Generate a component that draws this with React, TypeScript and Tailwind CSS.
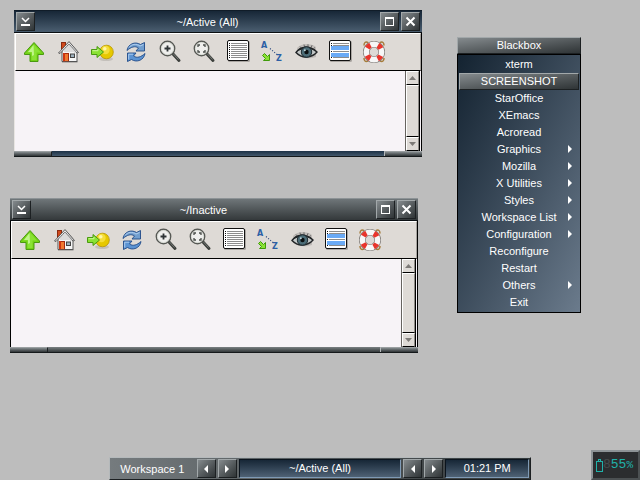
import React from "react";

const metal = "bg-linear-to-br from-[#858b8e] to-[#2f3436]";
const bevel =
  "border border-t-[#a2a8aa] border-l-[#a2a8aa] border-b-[#1c2022] border-r-[#1c2022]";

function TitleButton({ label, children }: { label: string; children: React.ReactNode }) {
  return (
    <button
      aria-label={label}
      className={`flex size-[19px] shrink-0 items-center justify-center ${metal} ${bevel}`}
    >
      <svg width="11" height="11" viewBox="0 0 11 11" fill="none" stroke="#fff" shapeRendering="crispEdges">
        {children}
      </svg>
    </button>
  );
}

function UpIcon() {
  return (
    <>
      <path d="M12 2.5 L21.5 13 V14.5 H16 V21.5 H8 V14.5 H2.5 V13 Z" fill="#73d216" stroke="#4a9a10" />
      <path d="M12 4.5 L19 12.6 H14.6 V20 H9.5 V12.6 H5 Z" fill="#8ae234" />
      <path d="M11.5 5 L6 12 H10 V16 L12 15 Z" fill="#c0f58a" />
    </>
  );
}

function HomeIcon() {
  return (
    <>
      <rect x="5.5" y="2.5" width="4" height="7" fill="#d04a1c" stroke="#8a2a10" />
      <path d="M6 10 L13 2 L21 11 V21.5 H6 Z" fill="#f6f6f6" stroke="#555" />
      <path d="M13 1.5 L2.5 13 L4 13.5 L13 4 L21 13 L22.5 12.5 Z" fill="#e8e8e8" stroke="#444" strokeWidth=".8" />
      <path d="M9 8v4M11 6v6M13 4v8M15 6v6M17 8v4M19 10v3" stroke="#b5b5b5" strokeWidth=".8" />
      <rect x="7.5" y="13.5" width="5" height="8" fill="#f07830" stroke="#a52a10" />
      <rect x="7" y="13" width="2" height="9" fill="#cc3512" />
      <rect x="14.5" y="14" width="4" height="3.5" fill="#9db0bd" stroke="#444" />
      <path d="M6 21.8H21.5" stroke="#555" />
    </>
  );
}

function GoIcon() {
  return (
    <>
      <ellipse cx="16" cy="19" rx="7" ry="2" fill="#c4c0bb" />
      <circle cx="16.5" cy="12" r="6.8" fill="#e6c800" stroke="#b89600" strokeWidth=".8" />
      <circle cx="15.5" cy="10" r="4.2" fill="#f5de3c" />
      <circle cx="14.8" cy="8.8" r="1.8" fill="#fff6a8" />
      <path d="M1.5 9.5 H7 V6.5 L13.5 12 L7 17.5 V14.5 H1.5 Z" fill="#8ae234" stroke="#4a9a10" />
      <path d="M2.5 10.7H8V9" stroke="#c8f797" fill="none" />
    </>
  );
}

function ReloadIcon() {
  return (
    <>
      <path
        d="M3 10.5 C4 4 11 1 16.5 4.5 L20.5 2.5 V11 H12 L14.5 8 C11 5.5 7 7 3 10.5Z"
        fill="#729fcf"
        stroke="#204a87"
        strokeWidth=".9"
      />
      <path
        d="M21 13.5 C20 20 13 23 7.5 19.5 L3.5 21.5 V13 H12 L9.5 16 C13 18.5 17 17 21 13.5Z"
        fill="#5b93d3"
        stroke="#204a87"
        strokeWidth=".9"
      />
      <path d="M5 7.5C8 3.8 12 3.6 16 6L19.5 4.5M4.7 19.5V14.2H9" fill="none" stroke="#b5d2f2" strokeWidth=".9" />
    </>
  );
}

function Lens({ children }: { children: React.ReactNode }) {
  return (
    <>
      <path d="M15 14 L21 20.5" stroke="#3c3f3c" strokeWidth="3" strokeLinecap="round" />
      <path d="M15.5 14 L20.5 19.5" stroke="#777b77" strokeWidth="1" />
      <circle cx="9.5" cy="8.5" r="7.2" fill="#efefed" stroke="#555753" strokeWidth="1.4" />
      <circle cx="9.5" cy="8.5" r="6.1" fill="none" stroke="#d3d7cf" strokeWidth=".8" />
      {children}
    </>
  );
}

function ZoomInIcon() {
  return (
    <Lens>
      <path d="M9.5 5.5V11.5M6.5 8.5H12.5" stroke="#2e3436" strokeWidth="1.8" />
    </Lens>
  );
}

function ZoomFitIcon() {
  return (
    <Lens>
      <path
        d="M6 7V5H8M11 5H13V7M13 10V12H11M8 12H6V10"
        fill="none"
        stroke="#4a4d4a"
        strokeWidth="1.3"
      />
    </Lens>
  );
}

function ListIcon({ marked = false }: { marked?: boolean }) {
  return (
    <>
      <rect x="2" y="1" width="22" height="21" rx="1.5" fill="#aaa6a2" />
      <rect x="1.5" y=".5" width="21" height="20" rx="1.5" fill="#fff" stroke="#111" />
      <g shapeRendering="crispEdges">
        <path d="M5 3.5H21M5 5.5H21M5 7.5H21M5 9.5H21M5 11.5H21M5 13.5H21M5 15.5H21M5 17.5H21" stroke="#8c8c8c" />
        <path d="M3.5 3V19" stroke="#111" strokeDasharray="1 1" />
        {marked && (
          <>
            <rect x="3" y="6" width="18" height="4" fill="#6aaaf5" />
            <rect x="3" y="13" width="18" height="4" fill="#6aaaf5" />
          </>
        )}
      </g>
    </>
  );
}

function SortIcon() {
  return (
    <>
      <text x="1" y="8" className="font-['DejaVu_Sans'] text-[8px] font-bold" fill="#2c5fa5">A</text>
      <text x="16" y="21" className="font-['DejaVu_Sans'] text-[8px] font-bold" fill="#2c5fa5">Z</text>
      <path d="M10 8.5L17 14.5" stroke="#2c4a80" strokeWidth="1.1" strokeDasharray="1.1 1.7" />
      <path d="M2.5 15.5L4.5 13.5L7.5 16.5L9.5 14.5V20.5H3.5L5.5 18.5Z" fill="#8ae234" stroke="#3f9a0a" />
    </>
  );
}

function EyeIcon() {
  return (
    <>
      <path d="M3 8C7 4 15 2 22 7L22 17C16 19 8 19 4 15Z" fill="#aaa7a3" opacity=".6" />
      <path d="M2 12.5C6 7 15 5 23 12C18 18 8 19 2 12.5Z" fill="#c3c8c8" stroke="#232628" strokeWidth="1.4" />
      <path d="M1.5 12.5C6 5.5 16 4 23 11.5C16 7.5 8 8 1.5 12.5Z" fill="#222527" />
      <path d="M6 6.5L7 8M10 4.5L10.5 7M14 4.3V7M18 5.2L17 8M21 7.5L19 9" stroke="#555" strokeWidth=".8" />
      <circle cx="12.5" cy="12" r="5.2" fill="#4c6d78" stroke="#1d2a30" />
      <circle cx="12.5" cy="12" r="2.2" fill="#0b0f11" />
      <circle cx="10.8" cy="10.3" r="1" fill="#bfd3da" />
    </>
  );
}

function HelpIcon() {
  return (
    <>
      <path
        d="M6 2.5Q2 1 2 5.5M18 2.5Q22 1 22 5.5M6 21Q2 22.5 2 18M18 21Q22 22.5 22 18"
        fill="none"
        stroke="#a67c3a"
        strokeWidth="1.5"
      />
      <circle cx="12" cy="12" r="7.7" fill="none" stroke="#77736f" strokeWidth="6.6" />
      <circle cx="12" cy="12" r="7.7" fill="none" stroke="#f7f7f7" strokeWidth="5.4" />
      <circle
        cx="12"
        cy="12"
        r="7.7"
        fill="none"
        stroke="#e8352c"
        strokeWidth="5.4"
        strokeDasharray="4.4 7.69"
        strokeDashoffset="-3.85"
      />
    </>
  );
}

const tools: [string, React.ReactNode][] = [
  ["Up", <UpIcon />],
  ["Home", <HomeIcon />],
  ["Go to", <GoIcon />],
  ["Reload", <ReloadIcon />],
  ["Zoom in", <ZoomInIcon />],
  ["Zoom to fit", <ZoomFitIcon />],
  ["List", <ListIcon />],
  ["Sort", <SortIcon />],
  ["Show hidden", <EyeIcon />],
  ["Select", <ListIcon marked />],
  ["Help", <HelpIcon />],
];

function ScrollArrow({ label, d }: { label: string; d: string }) {
  return (
    <button
      aria-label={label}
      className="flex h-[14px] shrink-0 items-center justify-center border border-t-white border-l-white border-r-[#8d8a86] border-b-black bg-[#dedad6]"
    >
      <svg width="7" height="4" viewBox="0 0 7 4">
        <path d={d} fill="#7d7a77" />
      </svg>
    </button>
  );
}

function FileWindow({
  title,
  active,
  place,
  body,
}: {
  title: string;
  active: boolean;
  place: string;
  body: string;
}) {
  const bar = active
    ? "from-[#172737] to-[#4b5e70] border-t-[#101c28]"
    : "from-[#6f7679] to-[#34393b] border-t-[#8d9396]";
  const handle = active ? "from-[#1c3146] to-[#43576b]" : "from-[#7b8184] to-[#34393b]";
  const grip = "w-[38px] bg-linear-to-b from-[#858b8e] to-[#2f3436] border-t border-t-[#9a9fa1]";
  return (
    <section className={`absolute w-[408px] ${place}`}>
      <header
        className={`flex h-[23px] items-center gap-[2px] border-t border-b border-b-[#0b0f12] bg-linear-to-b px-[2px] ${bar}`}
      >
        <TitleButton label="Minimize">
          <path d="M1 9H10" strokeWidth="2" />
          <path d="M2 2L5.5 5.5L9 2" strokeWidth="1.5" shapeRendering="auto" />
        </TitleButton>
        <h2 className="grow text-center">{title}</h2>
        <TitleButton label="Maximize">
          <path d="M1 2H10" strokeWidth="2" />
          <path d="M1.5 2V9.5H9.5V2" />
        </TitleButton>
        <TitleButton label="Close">
          <path d="M1.5 1.5L9.5 9.5M9.5 1.5L1.5 9.5" strokeWidth="2" shapeRendering="auto" />
        </TitleButton>
      </header>
      <div className={`border-r border-l border-r-black ${active ? "border-l-[#e8e5e2]" : "border-l-black"}`}>
        <div className="flex h-[38px] items-center border border-t-white border-r-[#a5a29e] border-b-black border-l-white bg-[#dedad6] px-px">
          {tools.map(([name, icon]) => (
            <button key={name} aria-label={name} className="flex w-[34px] justify-center">
              <svg width="24" height="24" viewBox="0 0 24 24" fill="none">
                {icon}
              </svg>
            </button>
          ))}
        </div>
        <div className={`flex bg-[#f7f3f7] pr-px ${body}`}>
          <div className="grow" />
          <div className="flex w-[15px] flex-col border-r border-l border-r-black border-l-[#66635f] bg-[#dedad6]">
            <ScrollArrow label="Scroll up" d="M3.5 0L7 4H0Z" />
            <div className="grow border border-t-white border-r-[#8d8a86] border-b-black border-l-white" />
            <ScrollArrow label="Scroll down" d="M3.5 4L7 0H0Z" />
          </div>
        </div>
      </div>
      <div className={`flex h-[6px] justify-between border-b border-b-[#15191b] bg-linear-to-b ${handle}`}>
        <div className={`${grip} border-r border-r-[#1c2022]`} />
        <div className={`${grip} border-l border-l-[#b5b9bb]`} />
      </div>
    </section>
  );
}

const menu: [string, boolean][] = [
  ["xterm", false],
  ["SCREENSHOT", false],
  ["StarOffice", false],
  ["XEmacs", false],
  ["Acroread", false],
  ["Graphics", true],
  ["Mozilla", true],
  ["X Utilities", true],
  ["Styles", true],
  ["Workspace List", true],
  ["Configuration", true],
  ["Reconfigure", false],
  ["Restart", false],
  ["Others", true],
  ["Exit", false],
];

function RootMenu() {
  return (
    <nav className="absolute top-[37px] left-[457px] w-[124px] text-center">
      <h2 className={`h-[17px] leading-[15px] ${metal} ${bevel}`}>Blackbox</h2>
      <ul className="border border-black bg-linear-to-br from-[#142331] to-[#6b7b8c] p-px">
        {menu.map(([name, sub]) => (
          <li key={name} className="relative">
            <button
              className={`block h-[17px] w-full leading-[15px] ${
                name === "SCREENSHOT" ? `${metal} ${bevel}` : "border border-transparent"
              }`}
            >
              {name}
            </button>
            {sub && (
              <svg className="absolute top-[4px] right-[7px]" width="4" height="8" viewBox="0 0 4 8">
                <path d="M0 0L4 4L0 8Z" fill="#fff" />
              </svg>
            )}
          </li>
        ))}
      </ul>
    </nav>
  );
}

function Step({ dir, label }: { dir: "left" | "right"; label: string }) {
  return (
    <button
      aria-label={label}
      className={`flex size-[19px] shrink-0 items-center justify-center ${metal} ${bevel}`}
    >
      <svg width="4" height="8" viewBox="0 0 4 8">
        <path d={dir === "left" ? "M4 0L0 4L4 8Z" : "M0 0L4 4L0 8Z"} fill="#fff" />
      </svg>
    </button>
  );
}

const sunken =
  "h-[19px] border border-t-[#0b141d] border-l-[#0b141d] border-b-[#7f9ab5] border-r-[#7f9ab5] bg-linear-to-b from-[#172737] to-[#4f6275] text-center leading-[17px]";

export default function App() {
  return (
    <main className="relative min-h-screen overflow-hidden bg-[#bdbdbd] font-['Liberation_Sans',Arial,sans-serif] text-[11px] leading-[14px] text-white">
      <FileWindow title="~/Active (All)" active place="top-[10px] left-[14px]" body="h-[80px]" />
      <FileWindow title="~/Inactive" active={false} place="top-[198px] left-[10px]" body="h-[88px]" />
      <RootMenu />

      <footer className="absolute inset-x-0 bottom-0 flex justify-center">
        <div className="flex h-[23px] w-[66%] items-center gap-[2px] border border-t-[#b4b9bb] border-r-[#1c2022] border-b-[#1c2022] border-l-[#b4b9bb] bg-linear-to-r from-[#757b7e] to-[#34393b] pr-px">
          <span className="w-[85px] text-center">Workspace 1</span>
          <Step dir="left" label="Previous workspace" />
          <Step dir="right" label="Next workspace" />
          <span className={`grow ${sunken}`}>~/Active (All)</span>
          <Step dir="left" label="Previous window" />
          <Step dir="right" label="Next window" />
          <time className={`w-[84px] ${sunken}`}>01:21 PM</time>
        </div>
      </footer>

      <aside className="absolute right-0 bottom-0 flex h-[30px] w-[49px] items-center border-2 border-t-[#8d9396] border-r-[#4b5052] border-b-[#4b5052] border-l-[#8d9396] bg-[#2b2d2f] pl-[3px] font-['Liberation_Mono',monospace] text-[13px] text-[#20b2aa]">
        <svg width="7" height="13" viewBox="0 0 7 13" fill="none" stroke="#20b2aa" shapeRendering="crispEdges">
          <path d="M2 .5H5M2.5 0V2M4.5 0V2M.5 2.5H6.5V12.5H.5Z" />
        </svg>
        <span className="text-[#454b4c]">8</span>
        <span>55</span>
        <span className="text-[11px]">%</span>
      </aside>
    </main>
  );
}
